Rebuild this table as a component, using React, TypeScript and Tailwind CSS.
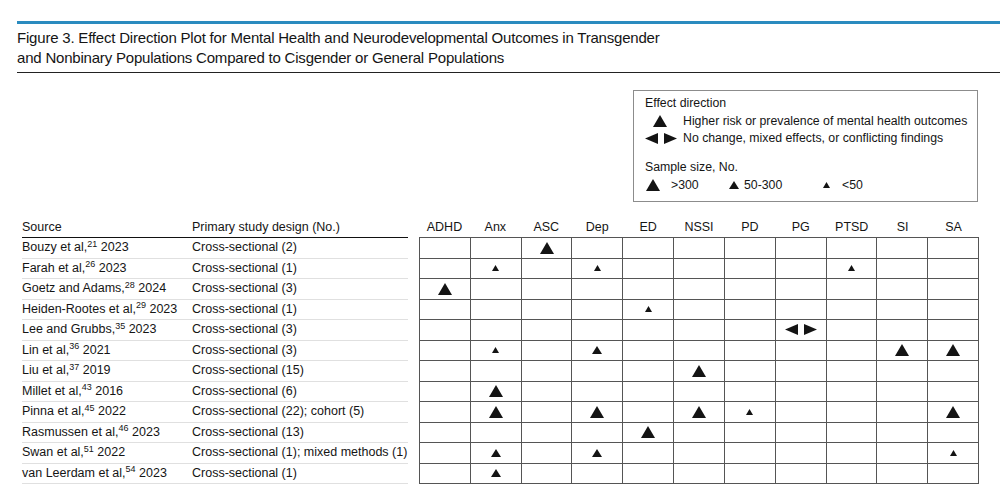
import React from 'react'

type Mark = 'L' | 'M' | 'S' | 'X'

type Study = {
  name: string
  refNo: string
  year: string
  design: string
  marks: Record<string, Mark>
}

const outcomes = ['ADHD', 'Anx', 'ASC', 'Dep', 'ED', 'NSSI', 'PD', 'PG', 'PTSD', 'SI', 'SA']

const studies: Study[] = [
  { name: 'Bouzy et al,', refNo: '21', year: '2023', design: 'Cross-sectional (2)', marks: { ASC: 'L' } },
  { name: 'Farah et al,', refNo: '26', year: '2023', design: 'Cross-sectional (1)', marks: { Anx: 'S', Dep: 'S', PTSD: 'S' } },
  { name: 'Goetz and Adams,', refNo: '28', year: '2024', design: 'Cross-sectional (3)', marks: { ADHD: 'L' } },
  { name: 'Heiden-Rootes et al,', refNo: '29', year: '2023', design: 'Cross-sectional (1)', marks: { ED: 'S' } },
  { name: 'Lee and Grubbs,', refNo: '35', year: '2023', design: 'Cross-sectional (3)', marks: { PG: 'X' } },
  { name: 'Lin et al,', refNo: '36', year: '2021', design: 'Cross-sectional (3)', marks: { Anx: 'S', Dep: 'M', SI: 'L', SA: 'L' } },
  { name: 'Liu et al,', refNo: '37', year: '2019', design: 'Cross-sectional (15)', marks: { NSSI: 'L' } },
  { name: 'Millet et al,', refNo: '43', year: '2016', design: 'Cross-sectional (6)', marks: { Anx: 'L' } },
  { name: 'Pinna et al,', refNo: '45', year: '2022', design: 'Cross-sectional (22); cohort (5)', marks: { Anx: 'L', Dep: 'L', NSSI: 'L', PD: 'S', SA: 'L' } },
  { name: 'Rasmussen et al,', refNo: '46', year: '2023', design: 'Cross-sectional (13)', marks: { ED: 'L' } },
  { name: 'Swan et al,', refNo: '51', year: '2022', design: 'Cross-sectional (1); mixed methods (1)', marks: { Anx: 'M', Dep: 'M', SA: 'S' } },
  { name: 'van Leerdam et al,', refNo: '54', year: '2023', design: 'Cross-sectional (1)', marks: { Anx: 'M' } },
]

const triSizes: Record<'L' | 'M' | 'S', [number, number]> = {
  L: [14, 12],
  M: [10, 8],
  S: [7, 6],
}

function Tri({ size }: { size: 'L' | 'M' | 'S' }) {
  const [w, h] = triSizes[size]
  return (
    <svg width={w} height={h} viewBox={`0 0 ${w} ${h}`} className="block">
      <polygon points={`${w / 2},0 ${w},${h} 0,${h}`} fill="#141414" />
    </svg>
  )
}

function Mixed() {
  return (
    <div className="flex items-center gap-[6px]">
      <svg width={13} height={11} viewBox="0 0 13 11" className="block">
        <polygon points="0,5.5 13,0 13,11" fill="#141414" />
      </svg>
      <svg width={13} height={11} viewBox="0 0 13 11" className="block">
        <polygon points="13,5.5 0,0 0,11" fill="#141414" />
      </svg>
    </div>
  )
}

function Cell({ mark }: { mark?: Mark }) {
  return (
    <div className="flex items-center justify-center border-r border-b border-[#555]">
      {mark === 'X' ? <Mixed /> : mark ? <Tri size={mark} /> : null}
    </div>
  )
}

export default function App() {
  return (
    <div className="w-[1000px] h-[503px] overflow-hidden bg-white text-[#151515] font-['Liberation_Sans',Arial,sans-serif]">
      {/* Caption */}
      <div className="pt-[21px] pl-[17px]">
        <div className="h-[3px] bg-[#2a8bbf]" />
        <div className="py-[4px] text-[15px] leading-[20px] tracking-[-0.2px]">
          <p>Figure 3. Effect Direction Plot for Mental Health and Neurodevelopmental Outcomes in Transgender</p>
          <p>and Nonbinary Populations Compared to Cisgender or General Populations</p>
        </div>
        <div className="h-px bg-[#222]" />
      </div>

      {/* Legend */}
      <div className="mt-[17px] ml-[633px] w-[345px] h-[112px] border border-[#8c8c8c] pl-[11px] pt-[3px] text-[12.3px]">
        <div className="h-[18px] leading-[18px]">Effect direction</div>
        <div className="h-[18px] flex items-center">
          <div className="ml-[8px] mr-[16px]">
            <Tri size="L" />
          </div>
          <span>Higher risk or prevalence of mental health outcomes</span>
        </div>
        <div className="h-[17px] flex items-center gap-[6px]">
          <Mixed />
          <span>No change, mixed effects, or conflicting findings</span>
        </div>
        <div className="mt-[12px] h-[17px] leading-[17px]">Sample size, No.</div>
        <div className="h-[18px] flex items-center">
          <div className="w-[84px] flex items-center gap-[11px] pl-[1px]">
            <Tri size="L" />
            <span>&gt;300</span>
          </div>
          <div className="w-[94px] flex items-center gap-[5px]">
            <Tri size="M" />
            <span>50-300</span>
          </div>
          <div className="flex items-center gap-[12px]">
            <Tri size="S" />
            <span>&lt;50</span>
          </div>
        </div>
      </div>

      {/* Table */}
      <div className="mt-[15px] pl-[22px] text-[12.5px]">
        <div className="flex h-[21px]">
          <div className="w-[386px] flex items-center border-b border-[#111]">
            <div className="w-[170px]">Source</div>
            <div>Primary study design (No.)</div>
          </div>
          <div className="w-[11px]" />
          <div className="w-[560px] grid grid-cols-11 border-b border-[#555]">
            {outcomes.map((o) => (
              <div key={o} className="flex items-center justify-center">
                {o}
              </div>
            ))}
          </div>
        </div>

        {studies.map((s) => (
          <div key={s.name} className="flex h-[20.5px]">
            <div className="w-[386px] flex items-center border-b border-[#e0e0e0]">
              <div className="w-[170px] whitespace-nowrap">
                {s.name}
                <sup className="text-[9px]">{s.refNo}</sup> {s.year}
              </div>
              <div className="whitespace-nowrap">{s.design}</div>
            </div>
            <div className="w-[11px]" />
            <div className="w-[560px] grid grid-cols-11 border-l border-[#555]">
              {outcomes.map((o) => (
                <Cell key={o} mark={s.marks[o]} />
              ))}
            </div>
          </div>
        ))}
      </div>
    </div>
  )
}
